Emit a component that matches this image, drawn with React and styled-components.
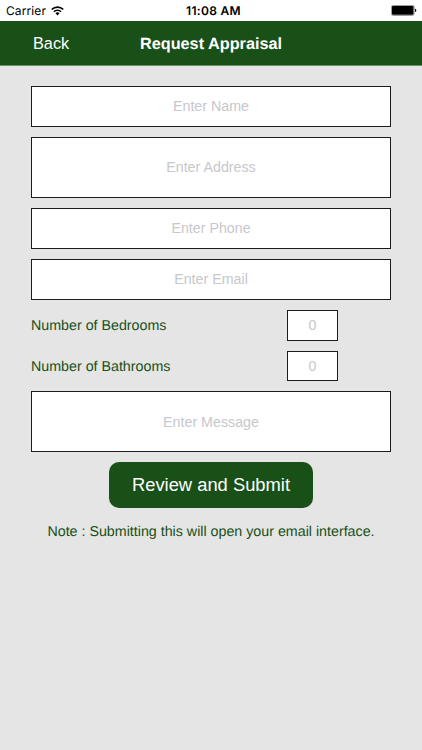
import React, { useState } from "react"
import styled, { createGlobalStyle } from "styled-components"

const GREEN = "#185018"

const App = () => {

  const [form, setForm] = useState({});

  const onChange = (event) => setForm({ ...form, [event.target.name]: event.target.value });

  const field = (name) => ({ name, value: form[name] || '', onChange });

  return (
    <Screen>
      <GlobalStyle />
      <StatusBar>
        <Carrier>
          <span>Carrier</span>
          <WifiIcon />
        </Carrier>
        <Clock>11:08 AM</Clock>
        <BatteryIcon />
      </StatusBar>
      <Header>
        <BackButton>Back</BackButton>
        <Title>Request Appraisal</Title>
      </Header>
      <Form onSubmit={(event) => event.preventDefault()}>
        <Input placeholder="Enter Name" {...field('fullName')} />
        <Input height="61px" placeholder="Enter Address" {...field('address')} />
        <Input placeholder="Enter Phone" {...field('phone')} />
        <Input placeholder="Enter Email" {...field('email')} />
        <CountRow>
          <Label>Number of Bedrooms</Label>
          <CountInput placeholder="0" {...field('bedrooms')} />
        </CountRow>
        <CountRow>
          <Label>Number of Bathrooms</Label>
          <CountInput placeholder="0" {...field('bathrooms')} />
        </CountRow>
        <MessageInput placeholder="Enter Message" {...field('message')} />
        <SubmitButton type="submit">Review and Submit</SubmitButton>
        <Note>Note : Submitting this will open your email interface.</Note>
      </Form>
    </Screen>
  )
}

const WifiIcon = () => (
  <svg width="13" height="10" viewBox="0 0 13 10">
    <g fill="none" stroke="#000" strokeWidth="1.6">
      <path d="M0.7 3.5 A8.2 8.2 0 0 1 12.3 3.5" />
      <path d="M2.9 5.8 A5.1 5.1 0 0 1 10.1 5.8" />
    </g>
    <path d="M6.5 9.4 L4.5 7.3 A2.8 2.8 0 0 1 8.5 7.3 Z" fill="#000" />
  </svg>
)

const BatteryIcon = () => (
  <svg width="26" height="11" viewBox="0 0 26 11">
    <rect x="0.4" y="0.4" width="22.8" height="10" rx="1.8" fill="#fff" stroke="#777" strokeWidth="0.8" />
    <rect x="1" y="1.1" width="21.5" height="8.6" rx="1" fill="#000" />
    <path d="M24 3.8 Q25.3 4.2 25.3 5.4 Q25.3 6.6 24 7 Z" fill="#000" />
  </svg>
)

const GlobalStyle = createGlobalStyle`
  * {
    box-sizing: border-box;
  }

  body {
    margin: 0;
    background: #e5e5e5;
    font-family: "Liberation Sans", Arial, sans-serif;
    text-rendering: geometricPrecision;
  }
`

const Screen = styled.div`
  display: flex;
  flex-direction: column;
  min-height: 750px;
  background: #e5e5e5;
`

const StatusBar = styled.div`
  display: grid;
  grid-template-columns: 1fr auto 1fr;
  align-items: center;
  height: 21px;
  padding: 0 5px 0 6px;
  background: #fff;
  color: #000;
  font-family: Inter, sans-serif;
  font-size: 12px;

  > svg {
    justify-self: end;
  }
`

const Carrier = styled.div`
  display: flex;
  align-items: center;
  gap: 5px;
  letter-spacing: 0.1px;
`

const Clock = styled.span`
  padding-left: 4px;
  font-weight: 600;
  letter-spacing: 0.3px;
`

const Header = styled.header`
  display: grid;
  grid-template-columns: 1fr auto 1fr;
  align-items: center;
  height: 45px;
  background: ${GREEN};
  color: #fff;
  border-bottom: 1px solid #6f936f;
`

const BackButton = styled.button`
  justify-self: start;
  margin-left: 33px;
  padding: 0;
  border: none;
  background: none;
  color: #fff;
  font-family: inherit;
  font-size: 16.3px;
  cursor: pointer;
`

const Title = styled.h1`
  margin: 0;
  padding-top: 2px;
  font-size: 16.25px;
  font-weight: bold;
`

const Form = styled.form`
  display: flex;
  flex-direction: column;
  gap: 10px;
  padding: 20px 31px;
`

const Input = styled.input`
  width: 100%;
  height: ${(props) => props.height || "41px"};
  padding: 0 0 1px;
  border: 1px solid #1c1c1e;
  border-radius: 0;
  background: #fff;
  color: ${GREEN};
  font-family: inherit;
  font-size: 14.25px;
  text-align: center;

  &:focus {
    outline: 0;
  }

  &::placeholder {
    color: #c7c7cc;
    opacity: 1;
  }
`

const MessageInput = styled(Input)`
  height: 61.2px;
  padding: 0;
`

const CountRow = styled.div`
  display: flex;
  align-items: center;
  justify-content: space-between;
  height: 30.6px;
  padding-right: 53px;
`

const Label = styled.label`
  padding-top: 1.4px;
  color: ${GREEN};
  font-size: 14.25px;
`

const CountInput = styled(Input)`
  width: 51px;
  height: 30.6px;
  padding: 0;
`

const SubmitButton = styled.button`
  align-self: center;
  width: 204px;
  height: 46px;
  padding: 0;
  border: none;
  border-radius: 10px;
  background: ${GREEN};
  color: #fff;
  font-family: inherit;
  font-size: 18.35px;
  cursor: pointer;
`

const Note = styled.p`
  margin: 6px 0 0;
  color: ${GREEN};
  font-size: 14.25px;
  text-align: center;
`

export default App
